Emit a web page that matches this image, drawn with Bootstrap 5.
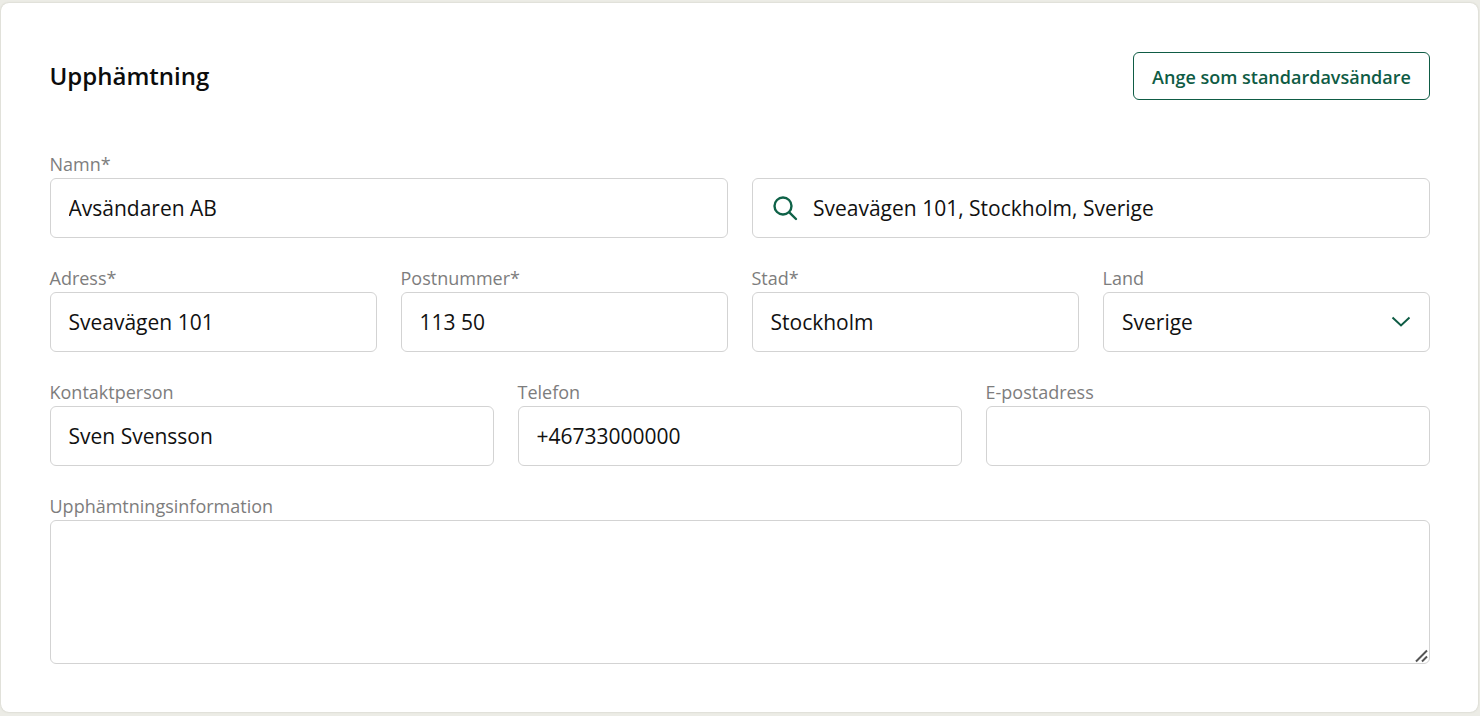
<!DOCTYPE html>
<html lang="sv">
<head>
<meta charset="utf-8">
<title>Upphämtning</title>
<link href="https://cdn.jsdelivr.net/npm/bootstrap@5.3.0/dist/css/bootstrap.min.css" rel="stylesheet">
<style>
html,body{height:100%;}
body{background:#ecece6;font-family:"Open Sans",sans-serif;color:#111;overflow:hidden;padding:3px 2px 3px 1px;}
.sheet{background:#fff;border-radius:8px;height:709px;padding:49px 48px 0 49px;box-shadow:0 0 2px rgba(120,120,100,.35);border:0;}
.sheet-title{font-size:24px;font-weight:600;color:#0c0c0c;margin:0 0 0 -.5px;line-height:48px;}
.btn-std{font-size:18px;font-weight:600;height:48px;width:297px;padding:2px 0 0;color:#0f5c45;border:1px solid #0f5c45;border-radius:6px;background:#fff;}
.btn-std:hover{background:#fff;color:#0f5c45;border-color:#0f5c45;}
.head-row{margin-bottom:52px;}
.fld-label{display:block;font-size:18px;line-height:24px;padding-bottom:2px;color:#7d7d7d;margin:0 0 0 -.5px;}
.fld{height:60px;font-size:21px;color:#111;border:1px solid #d3d3d3;border-radius:6px;padding:0 18px 1px 17.5px;box-shadow:none;}
.fld-select{padding:2px 40px 0 18px;background-image:url("data:image/svg+xml,%3csvg xmlns='http://www.w3.org/2000/svg' viewBox='0 0 20 12'%3e%3cpath fill='none' stroke='%230f5c45' stroke-width='2' d='M1.5 1.5 10 9.5l8.500-8'/%3e%3c/svg%3e");background-size:20px 12px;background-position:right 18px center;}
.search-wrap{margin-top:26px;position:relative;}
.search-wrap .fld{padding-left:60px;}
.search-ico{position:absolute;left:20px;top:17px;width:26px;height:26px;}
.form-grid{--bs-gutter-x:24px;--bs-gutter-y:28px;}
.note{height:144px;padding:10px 18px;}
.note::-webkit-resizer{background:url("data:image/svg+xml,%3csvg xmlns='http://www.w3.org/2000/svg' width='15' height='15'%3e%3cpath fill='none' stroke='%23555' stroke-width='2' d='M2 13.500 13 2.500M8 13.500l5-5'/%3e%3c/svg%3e") no-repeat;}
</style>
</head>
<body>
<div class="card sheet">
  <div class="d-flex justify-content-between align-items-center head-row">
    <h2 class="sheet-title">Upphämtning</h2>
    <button type="button" class="btn btn-std">Ange som standardavsändare</button>
  </div>
  <form class="row form-grid">
    <div class="col-6">
      <label class="fld-label" for="a1">Namn*</label>
      <input id="a1" class="form-control fld" value="Avsändaren AB">
    </div>
    <div class="col-6">
      <div class="search-wrap">
        <svg class="search-ico" viewBox="0 0 26 26" fill="none" stroke="#0f6248" stroke-width="2.4" stroke-linecap="round"><circle cx="11" cy="11" r="8.500"/><path d="M17.300 17.300 24 24"/></svg>
        <input class="form-control fld" aria-label="Sök adress" value="Sveavägen 101, Stockholm, Sverige">
      </div>
    </div>
    <div class="col-3">
      <label class="fld-label" for="a2">Adress*</label>
      <input id="a2" class="form-control fld" value="Sveavägen 101">
    </div>
    <div class="col-3">
      <label class="fld-label" for="a3">Postnummer*</label>
      <input id="a3" class="form-control fld" value="113 50">
    </div>
    <div class="col-3">
      <label class="fld-label" for="a4">Stad*</label>
      <input id="a4" class="form-control fld" value="Stockholm">
    </div>
    <div class="col-3">
      <label class="fld-label" for="a5">Land</label>
      <select id="a5" class="form-select fld fld-select"><option>Sverige</option></select>
    </div>
    <div class="col-4">
      <label class="fld-label" for="a6">Kontaktperson</label>
      <input id="a6" class="form-control fld" value="Sven Svensson">
    </div>
    <div class="col-4">
      <label class="fld-label" for="a7">Telefon</label>
      <input id="a7" class="form-control fld" value="+46733000000">
    </div>
    <div class="col-4">
      <label class="fld-label" for="a8">E-postadress</label>
      <input id="a8" class="form-control fld">
    </div>
    <div class="col-12">
      <label class="fld-label" for="a9">Upphämtningsinformation</label>
      <textarea id="a9" class="form-control fld note"></textarea>
    </div>
  </form>
</div>
<script src="https://cdn.jsdelivr.net/npm/bootstrap@5.3.0/dist/js/bootstrap.bundle.min.js"></script>
</body>
</html>
